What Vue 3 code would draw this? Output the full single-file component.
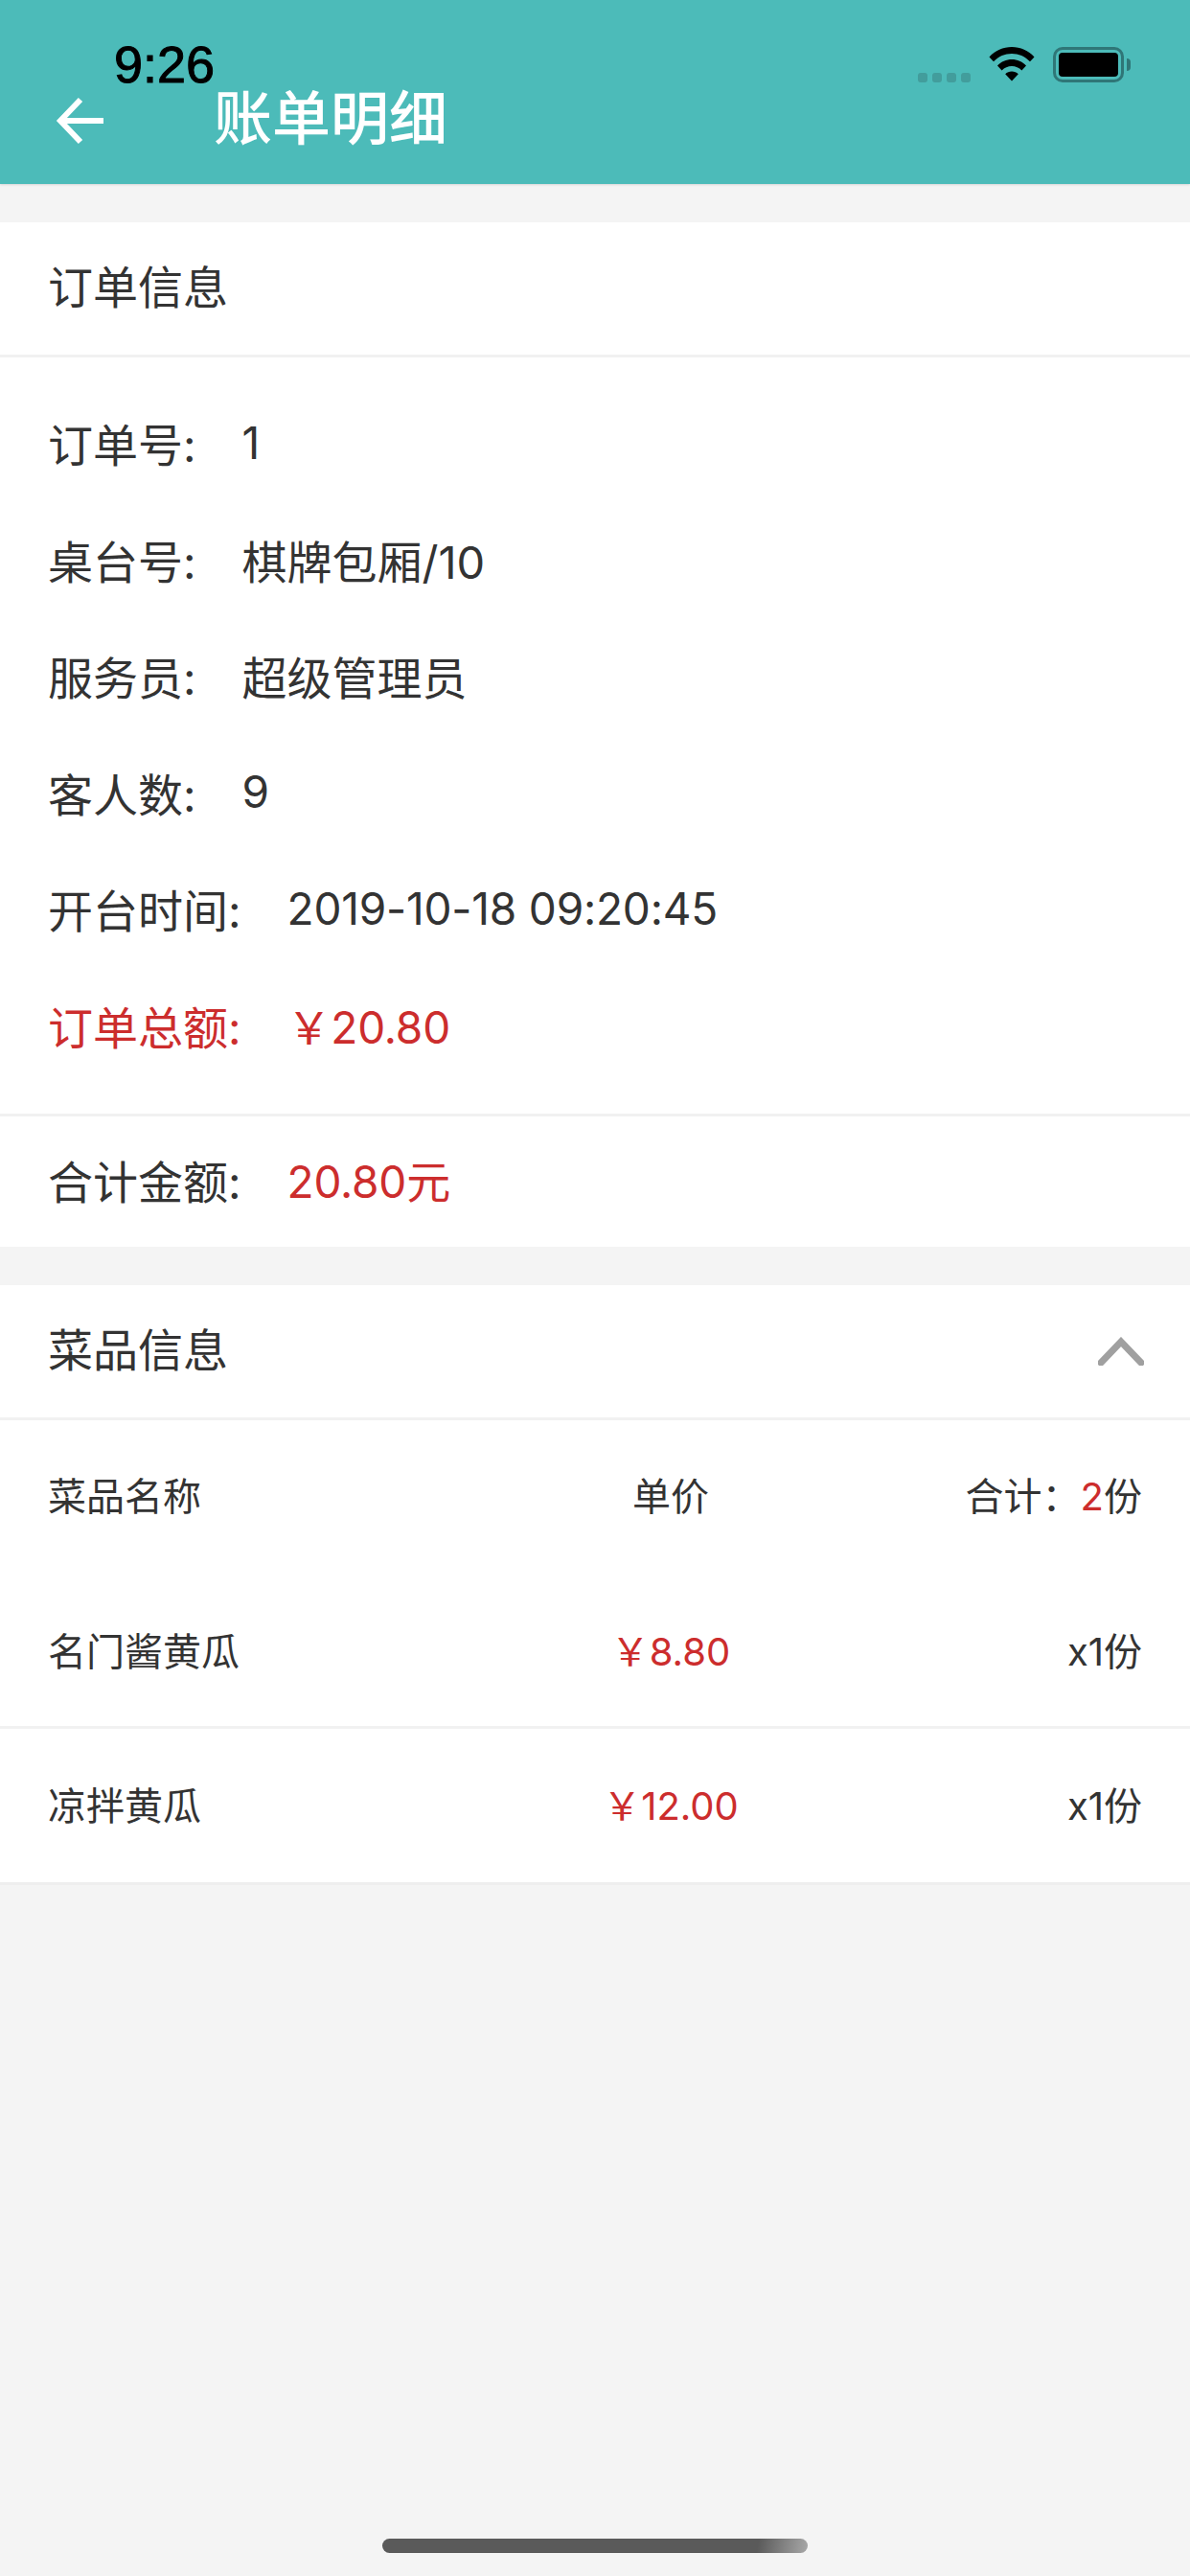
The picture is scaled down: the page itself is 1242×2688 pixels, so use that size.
<script setup>
const infoRows = [
  { label: '订单号:', value: '1', num: true },
  { label: '桌台号:', value: '棋牌包厢/10', num: false },
  { label: '服务员:', value: '超级管理员', num: false },
  { label: '客人数:', value: '9', num: true },
  { label: '开台时间:', value: '2019-10-18 09:20:45', num: true }
]
const dishes = [
  { name: '名门酱黄瓜', price: '￥8.80', qty: 'x1份' },
  { name: '凉拌黄瓜', price: '￥12.00', qty: 'x1份' }
]
</script>

<template>
  <div class="page">
    <header class="topbar">
      <div class="status">
        <span class="time">9:26</span>
        <div class="status-icons">
          <div class="signal"><i></i><i></i><i></i><i></i></div>
          <svg class="wifi" width="48" height="36" viewBox="0 0 48 36">
            <path d="M0.500 10.500C6.500 3.800 15 0 24 0s17.500 3.800 23.500 10.500l-4.500 4.800C38 9.900 31.200 7 24 7S10 9.900 5 15.300z" fill="#000"/>
            <path d="M9 19.500C13 15.300 18.300 13 24 13s11 2.300 15 6.500l-4.600 4.900C31.600 21.600 28 20 24 20s-7.600 1.600-10.400 4.400z" fill="#000"/>
            <path d="M17.200 28.200C19 26.400 21.400 25.500 24 25.500s5 0.900 6.800 2.700L24 35.500z" fill="#000"/>
          </svg>
          <div class="battery"><div class="battery-fill"></div></div>
          <div class="battery-cap"></div>
        </div>
      </div>
      <div class="nav">
        <svg class="back" width="56" height="56" viewBox="0 0 56 56">
          <path d="M52 28H8M28 6L7 28l21 22" fill="none" stroke="#fff" stroke-width="6"/>
        </svg>
        <h1 class="title">账单明细</h1>
      </div>
    </header>

    <section class="card first">
      <div class="card-head"><span class="lift">订单信息</span></div>
      <div class="info">
        <div v-for="row in infoRows" :key="row.label" class="info-row">
          <span class="label">{{ row.label }}</span>
          <span :class="{ num: row.num }">{{ row.value }}</span>
        </div>
        <div class="info-row red">
          <span class="label">订单总额:</span>
          <span class="num">￥20.80</span>
        </div>
      </div>
      <div class="sum">
        <span class="label">合计金额:</span>
        <span class="num red">20.80元</span>
      </div>
    </section>

    <section class="card second">
      <div class="card-head between">
        <span class="lift">菜品信息</span>
        <svg class="chevron" width="48" height="30" viewBox="0 0 48 30">
          <path d="M3 27L24 5l21 22" fill="none" stroke="#a0a0a0" stroke-width="7" stroke-linecap="round" stroke-linejoin="miter"/>
        </svg>
      </div>
      <div class="table-row table-head">
        <span class="c-name">菜品名称</span>
        <span class="c-price">单价</span>
        <span class="c-qty">合计：<em>2</em>份</span>
      </div>
      <div v-for="d in dishes" :key="d.name" class="table-row dish">
        <span class="c-name">{{ d.name }}</span>
        <span class="c-price red">{{ d.price }}</span>
        <span class="c-qty">{{ d.qty }}</span>
      </div>
    </section>

    <div class="home"></div>
  </div>
</template>

<style scoped>
.page {
  position: relative;
  width: 1242px;
  height: 2688px;
  overflow: hidden;
  background: #f4f4f4;
  color: #333;
  font-family: Inter, "Noto Sans CJK SC", sans-serif;
  font-weight: 400;
}
.topbar {
  position: relative;
  height: 192px;
  background: #4cbbb9;
  box-shadow: 0 1px 2px rgba(0, 0, 0, 0.12);
}
.status {
  position: absolute;
  left: 0;
  right: 0;
  top: 0;
  height: 88px;
}
.time {
  position: absolute;
  left: 119px;
  top: 37px;
  font-family: "Liberation Sans", sans-serif;
  font-size: 54px;
  line-height: 60px;
  font-weight: 400;
  color: #000;
  -webkit-text-stroke: 1px #000;
}
.status-icons {
  position: absolute;
  left: 958px;
  top: 49px;
  display: flex;
  align-items: flex-start;
}
.signal {
  display: flex;
  gap: 5px;
  margin-top: 27px;
}
.signal i {
  display: block;
  width: 10px;
  height: 10px;
  border-radius: 3px;
  background: #429d9c;
}
.wifi {
  margin-left: 19px;
}
.battery {
  box-sizing: border-box;
  width: 74px;
  height: 37px;
  margin-left: 19px;
  padding: 3px;
  border: 3px solid #2f7677;
  border-radius: 10px;
}
.battery-fill {
  width: 100%;
  height: 100%;
  border-radius: 4px;
  background: #000;
}
.battery-cap {
  width: 4px;
  height: 13px;
  margin: 12px 0 0 3px;
  border-radius: 0 4px 4px 0;
  background: #2f7677;
}
.nav {
  position: absolute;
  left: 56px;
  top: 96px;
  display: flex;
  align-items: center;
  height: 60px;
}
.back {
  width: 56px;
}
.title {
  margin: -4px 0 0 111px;
  font-size: 61px;
  line-height: 60px;
  font-weight: 500;
  color: #fff;
}
.card {
  background: #fff;
}
.first {
  margin-top: 40px;
}
.second {
  margin-top: 40px;
  border-bottom: 3px solid #eee;
}
.card-head {
  box-sizing: border-box;
  height: 141px;
  padding: 0 50px;
  display: flex;
  align-items: center;
  font-size: 47px;
  border-bottom: 3px solid #f1f1f1;
}
.lift {
  margin-bottom: 10px;
}
.between {
  justify-content: space-between;
  padding-right: 48px;
}
.info {
  padding: 30px 50px 30px;
  border-bottom: 3px solid #f1f1f1;
}
.info-row {
  box-sizing: border-box;
  height: 121.500px;
  padding-bottom: 4px;
  display: flex;
  align-items: center;
  font-size: 47px;
}
.label {
  margin-right: 48px;
}
.num {
  font-size: 46px;
  letter-spacing: -0.2px;
}
.sum {
  box-sizing: border-box;
  height: 136px;
  padding: 0 50px 6px;
  display: flex;
  align-items: center;
  font-size: 47px;
}
.red {
  color: #cc2d2d;
}
.table-row {
  box-sizing: border-box;
  display: flex;
  align-items: center;
  padding: 0 50px 4px;
  font-size: 40px;
}
.table-head {
  height: 162px;
  padding-bottom: 8px;
}
.dish {
  height: 160px;
  border-bottom: 3px solid #f1f1f1;
}
.dish:last-child {
  border-bottom: 0;
}
.c-name {
  flex: 0 0 500px;
}
.c-price {
  flex: 0 0 300px;
  text-align: center;
}
.c-qty {
  flex: 1 1 0;
  text-align: right;
}
.c-qty em {
  font-style: normal;
  color: #cc2d2d;
}
.home {
  position: absolute;
  left: 399px;
  top: 2649px;
  width: 444px;
  height: 15px;
  border-radius: 8px;
  background: linear-gradient(100deg, #5a5a5a 0 88%, #a8a8a8 100%);
}
</style>
